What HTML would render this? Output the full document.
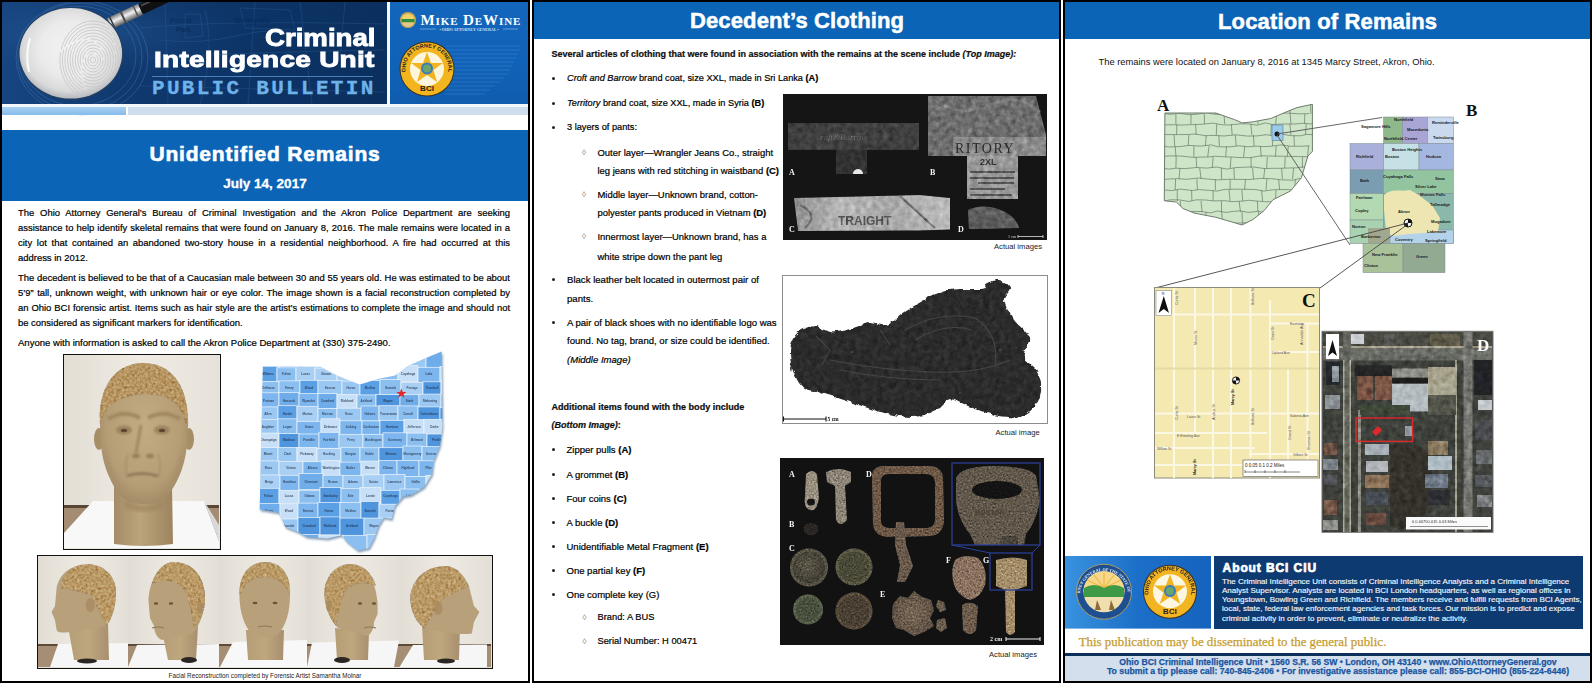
<!DOCTYPE html>
<html><head><meta charset="utf-8">
<style>
*{margin:0;padding:0;box-sizing:border-box}
html,body{width:1592px;height:683px;overflow:hidden;background:#fff;font-family:"Liberation Sans",sans-serif;color:#1e1e1e}
.a{position:absolute}
.frame{position:absolute;top:0;height:683px;border:2px solid #000;pointer-events:none;z-index:50}
.t{position:absolute;white-space:nowrap}
.t.b{-webkit-text-stroke:0.2px #000}
.hd{position:absolute;color:#fff;font-weight:bold;white-space:nowrap}
.para{position:absolute;font-size:9.5px;line-height:15px;text-align:justify;color:#000;-webkit-text-stroke:0.2px #000}
.para p{margin-bottom:5px}
.li{position:absolute;white-space:nowrap;font-size:9.2px;color:#000;-webkit-text-stroke:0.2px #000}
.dot{position:absolute;width:3px;height:3px;border-radius:50%;background:#222}
.dia{position:absolute;font-size:8px;color:#777}
svg{position:absolute;overflow:visible}
.b{font-weight:bold}
.i{font-style:italic}
</style></head><body>
<svg width="0" height="0" style="position:absolute;left:0;top:0">
<defs>
<filter id="txF" x="-5%" y="-5%" width="110%" height="110%" color-interpolation-filters="sRGB">
  <feTurbulence type="fractalNoise" baseFrequency="0.55" numOctaves="2" seed="4" result="noise"/>
  <feColorMatrix in="noise" type="matrix" values="0.33 0.33 0.33 0 0  0.33 0.33 0.33 0 0  0.33 0.33 0.33 0 0  0 0 0 0 1" result="gray"/>
  <feBlend in="gray" in2="SourceGraphic" mode="overlay" result="bl"/>
  <feComposite in="bl" in2="SourceAlpha" operator="in"/>
</filter>
<filter id="txC" x="-5%" y="-5%" width="110%" height="110%" color-interpolation-filters="sRGB">
  <feTurbulence type="fractalNoise" baseFrequency="0.22" numOctaves="3" seed="9" result="noise"/>
  <feColorMatrix in="noise" type="matrix" values="0.33 0.33 0.33 0 0  0.33 0.33 0.33 0 0  0.33 0.33 0.33 0 0  0 0 0 0 1" result="gray"/>
  <feComponentTransfer in="gray" result="g2"><feFuncR type="linear" slope="1.4" intercept="-0.2"/><feFuncG type="linear" slope="1.4" intercept="-0.2"/><feFuncB type="linear" slope="1.4" intercept="-0.2"/></feComponentTransfer>
  <feBlend in="g2" in2="SourceGraphic" mode="overlay" result="bl"/>
  <feComposite in="bl" in2="SourceAlpha" operator="in"/>
</filter>
<filter id="txM" x="-5%" y="-5%" width="110%" height="110%" color-interpolation-filters="sRGB">
  <feTurbulence type="fractalNoise" baseFrequency="0.25" numOctaves="3" seed="2" result="noise"/>
  <feColorMatrix in="noise" type="matrix" values="0.33 0.33 0.33 0 0  0.33 0.33 0.33 0 0  0.33 0.33 0.33 0 0  0 0 0 0 1" result="gray"/>
  <feComponentTransfer in="gray" result="g2"><feFuncR type="linear" slope="1.1" intercept="-0.05"/><feFuncG type="linear" slope="1.1" intercept="-0.05"/><feFuncB type="linear" slope="1.1" intercept="-0.05"/></feComponentTransfer>
  <feBlend in="g2" in2="SourceGraphic" mode="overlay" result="bl"/>
  <feComposite in="bl" in2="SourceAlpha" operator="in"/>
</filter>
<filter id="txS" x="-5%" y="-5%" width="110%" height="110%" color-interpolation-filters="sRGB">
  <feTurbulence type="fractalNoise" baseFrequency="0.18" numOctaves="3" seed="5" result="noise"/>
  <feColorMatrix in="noise" type="matrix" values="0.33 0.33 0.33 0 0  0.33 0.33 0.33 0 0  0.33 0.33 0.33 0 0  0 0 0 0 1" result="gray"/>
  <feComponentTransfer in="gray" result="g2"><feFuncR type="linear" slope="0.7" intercept="0.15"/><feFuncG type="linear" slope="0.7" intercept="0.15"/><feFuncB type="linear" slope="0.7" intercept="0.15"/></feComponentTransfer>
  <feBlend in="g2" in2="SourceGraphic" mode="overlay" result="bl"/>
  <feComposite in="bl" in2="SourceAlpha" operator="in"/>
</filter>
<filter id="txH" x="-5%" y="-5%" width="110%" height="110%" color-interpolation-filters="sRGB">
  <feTurbulence type="fractalNoise" baseFrequency="0.38" numOctaves="2" seed="8" result="noise"/>
  <feColorMatrix in="noise" type="matrix" values="0.33 0.33 0.33 0 0  0.33 0.33 0.33 0 0  0.33 0.33 0.33 0 0  0 0 0 0 1" result="gray"/>
  <feComponentTransfer in="gray" result="g2"><feFuncR type="linear" slope="1.6" intercept="-0.3"/><feFuncG type="linear" slope="1.6" intercept="-0.3"/><feFuncB type="linear" slope="1.6" intercept="-0.3"/></feComponentTransfer>
  <feBlend in="g2" in2="SourceGraphic" mode="soft-light" result="bl"/>
  <feComposite in="bl" in2="SourceAlpha" operator="in"/>
</filter>
<filter id="rough" x="-5%" y="-5%" width="110%" height="110%">
  <feTurbulence type="fractalNoise" baseFrequency="0.15" numOctaves="2" seed="3" result="n"/>
  <feDisplacementMap in="SourceGraphic" in2="n" scale="5" xChannelSelector="R" yChannelSelector="G"/>
</filter>
</defs></svg>
<div class="frame" style="left:0;width:530px"></div>
<div class="frame" style="left:532px;width:529px"></div>
<div class="frame" style="left:1063px;width:529px"></div>
<!-- ================= PANEL 1 ================= -->
<!-- header left navy -->
<div class="a" style="left:2px;top:2px;width:385px;height:102px;background:linear-gradient(90deg,#164580 0%,#10396f 30%,#0d3466 60%,#0b305f 100%)"></div>
<svg style="left:0;top:0" width="530" height="106" viewBox="0 0 530 106">
  <defs>
    <radialGradient id="lens" cx="0.5" cy="0.45" r="0.55">
      <stop offset="0" stop-color="#f2f2f2"/>
      <stop offset="0.55" stop-color="#ebebeb"/>
      <stop offset="0.85" stop-color="#dadada"/>
      <stop offset="1" stop-color="#b4b8be"/>
    </radialGradient>
    <linearGradient id="chrome" x1="0" y1="0" x2="0" y2="1">
      <stop offset="0" stop-color="#7a7a7a"/><stop offset="0.45" stop-color="#f2f2f2"/><stop offset="1" stop-color="#5a5a5a"/>
    </linearGradient>
    <clipPath id="lensclip"><ellipse cx="70.8" cy="53.3" rx="50" ry="44"/></clipPath>
    <radialGradient id="hdrglow" cx="0.2" cy="0.3" r="0.5"><stop offset="0" stop-color="#2a5f9e" stop-opacity="0.6"/><stop offset="1" stop-color="#0f3a6f" stop-opacity="0"/></radialGradient>
  </defs>
  <rect x="2" y="2" width="385" height="102" fill="url(#hdrglow)"/>
  <g stroke="#3366a3" stroke-width="0.9" fill="none" opacity="0.35">
    <path d="M165 2 L168 104 M205 10 Q215 50 200 104 M255 2 L248 104 M300 2 L312 104 M345 2 L340 60"/>
    <path d="M140 28 Q220 20 385 24 M150 58 Q250 52 385 50 M140 86 L385 92 M160 40 Q200 45 240 35 T320 40"/>
    <path d="M185 14 L200 14 L203 36 L185 38 Z M240 8 L290 10 L295 30 L245 28 Z"/>
  </g>
  <text x="170" y="23" font-size="7" fill="#0a2c58" font-family="Liberation Sans" font-weight="bold" opacity="0.8">Forest</text>
  <text x="176" y="32" font-size="7" fill="#0a2c58" font-family="Liberation Sans" font-weight="bold" opacity="0.8">Park</text>
  <text x="234" y="23" font-size="7" fill="#0a2c58" font-family="Liberation Sans" font-weight="bold" opacity="0.8">Springdale</text>
  <g stroke="#5a8fcc" stroke-width="0.7" fill="none" opacity="0.45">
    <ellipse cx="78" cy="56" rx="58" ry="50"/><ellipse cx="80" cy="57" rx="62" ry="54"/><ellipse cx="82" cy="58" rx="66" ry="57"/>
  </g>
  <!-- handle -->
  <g transform="rotate(-25 126 16)">
    <rect x="108" y="10" width="34" height="12" fill="url(#chrome)"/>
    <rect x="110" y="10" width="1.5" height="12" fill="#3a3a3a"/><rect x="122" y="10" width="2" height="12" fill="#4a4a4a"/><rect x="136" y="10" width="1.5" height="12" fill="#555"/>
    <rect x="142" y="10.5" width="60" height="11" rx="2" fill="#111"/>
    <rect x="144" y="12" width="56" height="2" fill="#4a4a4a"/>
  </g>
  <ellipse cx="70.8" cy="53.5" rx="52.5" ry="46.5" fill="#243f60"/>
  <ellipse cx="70.8" cy="53.3" rx="51.3" ry="45.3" fill="url(#lens)"/>
  <g stroke="#c8c8c8" stroke-width="1" fill="none" opacity="0.9" clip-path="url(#lensclip)">
    <ellipse cx="93" cy="60" rx="2.5" ry="3.0" stroke-dasharray="23 3"/><ellipse cx="93" cy="60" rx="5.1" ry="6.0" stroke-dasharray="26 3"/><ellipse cx="93" cy="60" rx="7.6" ry="9.0" stroke-dasharray="29 3"/><ellipse cx="93" cy="60" rx="10.2" ry="12.0" stroke-dasharray="32 3"/><ellipse cx="93" cy="60" rx="12.8" ry="15.0" stroke-dasharray="35 3"/><ellipse cx="93" cy="60" rx="15.3" ry="18.0" stroke-dasharray="38 3"/><ellipse cx="93" cy="60" rx="17.8" ry="21.0" stroke-dasharray="41 3"/><ellipse cx="93" cy="60" rx="20.4" ry="24.0" stroke-dasharray="44 3"/><ellipse cx="93" cy="60" rx="22.9" ry="27.0" stroke-dasharray="47 3"/><ellipse cx="93" cy="60" rx="25.5" ry="30.0" stroke-dasharray="50 3"/><ellipse cx="93" cy="60" rx="28.1" ry="33.0" stroke-dasharray="53 3"/><ellipse cx="93" cy="60" rx="30.6" ry="36.0" stroke-dasharray="56 3"/><ellipse cx="93" cy="60" rx="33.1" ry="39.0" stroke-dasharray="59 3"/>
  </g>
  <path d="M30 38 Q25 55 29 72" stroke="#ffffff" stroke-width="2.2" fill="none" opacity="0.85"/>
</svg>
<div class="hd" style="left:264.5px;top:26px;font-size:24px;line-height:24px;transform:scaleX(1.15);transform-origin:0 0;-webkit-text-stroke:0.9px #fff">Criminal</div>
<div class="hd" style="left:153.5px;top:48.5px;font-size:22.5px;line-height:22.5px;transform:scaleX(1.245);transform-origin:0 0;letter-spacing:0.2px;-webkit-text-stroke:0.9px #fff">Intelligence Unit</div>
<div class="a" style="left:152px;top:76px;width:221px;height:1px;background:#4c7fba"></div>
<div class="t" style="left:152px;top:78px;font-family:'Liberation Mono',monospace;font-weight:bold;font-size:21px;line-height:21px;letter-spacing:2.3px;color:#6db3ea;-webkit-text-stroke:0.3px #6db3ea">PUBLIC BULLETIN</div>
<!-- divider + right header -->
<div class="a" style="left:387px;top:2px;width:3px;height:102px;background:#f4f8fc"></div>
<div class="a" style="left:390px;top:2px;width:138px;height:102px;background:linear-gradient(180deg,#1466bd 0%,#1062b8 60%,#0f5cae 100%)"></div>
<svg style="left:390px;top:2px" width="138" height="102" viewBox="390 2 138 102">
  <g stroke="#5d9be0" stroke-width="1">
    <path d="M446 46 H520 M444 50 H520 M444 54 H518 M444 58 H516 M444 62 H514 M444 66 H512 M444 70 H510 M444 74 H508 M444 78 H504 M444 82 H500 M444 86 H495 M444 90 H490 M444 94 H485" opacity="0.3"/>
  </g>
  <circle cx="408" cy="20" r="8" fill="#c9a850"/>
  <circle cx="408" cy="20" r="6.3" fill="#f0d26a"/>
  <rect x="401.5" y="19" width="13" height="3.5" fill="#2f8f3e"/>
  <path d="M402 22.5 H414 A6.3 6.3 0 0 1 402 22.5 Z" fill="#e6c58a"/>
  <path d="M420 29 H436 M503 29 H518" stroke="#9cc4ee" stroke-width="0.6"/>
  <text x="469" y="30.5" font-size="4" fill="#cfe2f6" text-anchor="middle" font-family="Liberation Serif" font-weight="bold">• OHIO ATTORNEY GENERAL •</text>
  <!-- BCI badge -->
  <circle cx="427" cy="69" r="27.5" fill="#3a3020"/>
  <circle cx="427" cy="69" r="26.5" fill="#f2b51e"/>
  <circle cx="427" cy="69" r="17" fill="#fdf5dc"/>
  <path d="M427 52 L431 63 L443 63 L433.5 70 L437 82 L427 75 L417 82 L420.5 70 L411 63 L423 63 Z" fill="#f2b51e"/>
  <circle cx="427" cy="68.5" r="6" fill="#3b7bc0"/>
  <circle cx="427" cy="68.5" r="4" fill="#6aa56a"/>
  <text x="427" y="91" font-size="8" fill="#222" text-anchor="middle" font-family="Liberation Sans" font-weight="bold">BCI</text>
  <path id="arcA" d="M406.8 76.35 A21.5 21.5 0 1 1 447.2 76.35" fill="none"/>
  <text font-size="5.5" fill="#222" font-family="Liberation Sans" font-weight="bold"><textPath href="#arcA" startOffset="50%" text-anchor="middle">OHIO ATTORNEY GENERAL</textPath></text>
</svg>
<div class="t" style="left:420.5px;top:12.5px;font-family:'Liberation Serif',serif;font-weight:bold;font-size:15px;line-height:15px;font-variant:small-caps;letter-spacing:0.9px;color:#fff">Mike DeWine</div>
<!-- light bars -->
<div class="a" style="left:2px;top:104px;width:526px;height:3px;background:#f2f7fc"></div>
<div class="a" style="left:2px;top:107px;width:124px;height:8px;background:linear-gradient(180deg,#a9d0f2,#86bbea)"></div>
<div class="a" style="left:128px;top:107px;width:400px;height:8px;background:#cfdeec"></div>
<!-- blue title band -->
<div class="a" style="left:2px;top:130px;width:526px;height:71px;background:#0b64b6"></div>
<div class="hd" style="left:2px;width:526px;text-align:center;top:143px;font-size:21px;line-height:21px;letter-spacing:0.82px;padding-left:0px;-webkit-text-stroke:0.6px #fff">Unidentified Remains</div>
<div class="hd" style="left:2px;width:526px;text-align:center;top:176.5px;font-size:13.5px;line-height:13.5px;-webkit-text-stroke:0.3px #fff">July 14, 2017</div>
<!-- body text -->
<div class="para" style="left:18px;top:204.6px;width:492px;font-size:9.45px">
<div style="text-align-last:justify">The Ohio Attorney General’s Bureau of Criminal Investigation and the Akron Police Department are seeking</div>
<div style="text-align-last:justify">assistance to help identify skeletal remains that were found on January 8, 2016. The male remains were located in a</div>
<div style="text-align-last:justify">city lot that contained an abandoned two-story house in a residential neighborhood. A fire had occurred at this</div>
<div style="margin-bottom:5px">address in 2012.</div>
<div style="text-align-last:justify">The decedent is believed to be that of a Caucasian male between 30 and 55 years old. He was estimated to be about</div>
<div style="text-align-last:justify">5’9” tall, unknown weight, with unknown hair or eye color. The image shown is a facial reconstruction completed by</div>
<div style="text-align-last:justify">an Ohio BCI forensic artist. Items such as hair style are the artist’s estimations to complete the image and should not</div>
<div style="margin-bottom:5px">be considered as significant markers for identification.</div>
<div style="font-size:9.55px">Anyone with information is asked to call the Akron Police Department at (330) 375-2490.</div>
</div>
<!-- face photo -->
<div class="a" style="left:63px;top:354px;width:158px;height:196px;border:1.6px solid #111;background:#ebe7df;overflow:hidden">
<svg style="left:0;top:0;filter:blur(0.4px)" width="155" height="193" viewBox="0 0 155 193">
  <defs>
    <linearGradient id="wall" x1="0" y1="0" x2="1" y2="0"><stop offset="0" stop-color="#e3ded4"/><stop offset="0.5" stop-color="#efebe4"/><stop offset="1" stop-color="#e7e2d9"/></linearGradient>
    <radialGradient id="skin" cx="0.5" cy="0.45" r="0.6"><stop offset="0" stop-color="#c3ac84"/><stop offset="0.7" stop-color="#b59d76"/><stop offset="1" stop-color="#9e8662"/></radialGradient>
    <linearGradient id="neck" x1="0" y1="0" x2="1" y2="0"><stop offset="0" stop-color="#a48c68"/><stop offset="0.45" stop-color="#bba37c"/><stop offset="1" stop-color="#9c845f"/></linearGradient>
    <filter id="fb" x="-20%" y="-20%" width="140%" height="140%"><feGaussianBlur stdDeviation="1.2"/></filter>
    <filter id="fb2" x="-20%" y="-20%" width="140%" height="140%"><feGaussianBlur stdDeviation="2.2"/></filter>
  </defs>
  <rect width="155" height="193" fill="url(#wall)"/>
  <rect x="0" y="150" width="155" height="43" fill="#a48c72"/>
  <rect x="0" y="150" width="155" height="3" fill="#5a4634"/>
  <path d="M29 146 L140 146 L155 186 L155 193 L0 193 L0 178 Z" fill="#f8f8f8"/>
  <path d="M140 146 L155 186 L155 170 Z" fill="#d8d8d8"/>
  <path d="M50 132 L108 132 L109 189 Q80 193 50 189 Z" fill="url(#neck)"/>
  <path d="M62 146 Q80 156 98 146 L100 152 Q80 160 60 152 Z" fill="#a08862" filter="url(#fb2)"/>
  <ellipse cx="35" cy="84" rx="5" ry="11" fill="#a68e69"/>
  <ellipse cx="125" cy="84" rx="5" ry="11" fill="#a68e69"/>
  <path d="M79 10 C103 10 121 27 123 58 C125 76 124 96 118 114 C113 128 106 140 97 146 C90 150 70 150 63 146 C54 140 47 128 42 114 C36 96 35 76 37 58 C39 27 55 10 79 10 Z" fill="url(#skin)"/>
  <g filter="url(#fb)">
    <path d="M44 64 Q60 54 76 63 M84 63 Q100 54 116 64" stroke="#a0885f" stroke-width="4" fill="none"/>
    <ellipse cx="60" cy="75" rx="8" ry="4.5" fill="#9c845e"/>
    <ellipse cx="98" cy="75" rx="8" ry="4.5" fill="#9c845e"/>
    <path d="M77 70 L72 98" stroke="#a08860" stroke-width="3" fill="none"/>
    <ellipse cx="72" cy="101" rx="4" ry="2.2" fill="#94805a"/><ellipse cx="86" cy="101" rx="4" ry="2.2" fill="#94805a"/>
    <path d="M62 121 Q78 116 94 121" stroke="#8a7252" stroke-width="2.4" fill="none"/>
    <path d="M64 99 Q60 110 63 122 M94 99 Q98 110 95 122" stroke="#a89070" stroke-width="1.8" fill="none"/>
    <path d="M42 100 Q46 120 58 136 M118 100 Q114 120 102 136" stroke="#a89070" stroke-width="2" fill="none"/>
  </g>
  <ellipse cx="60" cy="75.5" rx="3.2" ry="1.7" fill="#5a4632"/>
  <ellipse cx="98" cy="75.5" rx="3.2" ry="1.7" fill="#5a4632"/>
  <path d="M36 70 C33 32 52 8 79 8 C107 8 126 30 124 74 C121 66 118 56 113 50 C105 42 94 39 82 39 C68 39 55 43 47 50 C41 56 38 62 36 70 Z" fill="#b99762" filter="url(#txH)"/>
</svg>
</div>
<!-- Ohio county map -->
<svg style="left:0;top:0" width="530" height="683" viewBox="0 0 530 683">
  <defs>
    <clipPath id="ohio1"><path d="M262.9 366.7 L320.9 366.7 L322.5 368 L337 375.6 L346.6 379.6 L359.5 384.5 L366 382.8 L378.8 378.8 L395 375.6 L407.8 366 L422.3 359.5 L441.6 351.4 L442.4 427 L440 445 L433.6 461 L432 474 L424 486.9 L411 495 L403 496.5 L395 506 L391.7 519 L383.7 517.5 L378.8 525.5 L374 538.4 L369 548 L357.9 550.5 L346.6 541.6 L341.8 535 L327.3 538.4 L306.4 536.8 L298.3 532 L285.4 527 L279 512.6 L266 510.2 L259.7 509.4 Z"/></clipPath>
    <filter id="sh" x="-10%" y="-10%" width="120%" height="120%"><feGaussianBlur stdDeviation="1"/></filter>
  </defs>
  <path d="M263.9 368.7 L321.9 368.7 L323.5 370 L338 377.6 L347.6 381.6 L360.5 386.5 L367 384.8 L379.8 380.8 L396 377.6 L408.8 368 L423.3 361.5 L442.6 353.4 L443.4 429 L441 447 L434.6 463 L433 476 L425 488.9 L412 497 L404 498.5 L396 508 L392.7 521 L384.7 519.5 L379.8 527.5 L375 540.4 L370 550 L358.9 552.5 L347.6 543.6 L342.8 537 L328.3 540.4 L307.4 538.8 L299.3 534 L286.4 529 L280 514.6 L267 512.2 L260.7 511.4 Z" fill="#8aa0b8" filter="url(#sh)"/>
  <g clip-path="url(#ohio1)" stroke="#eef5fc" stroke-width="0.7">
<rect x="258" y="347.3" width="22" height="21" fill="#7db6ee"/>
<rect x="280" y="349.3" width="24" height="21" fill="#5b9fe4"/>
<rect x="304" y="348.8" width="21" height="21" fill="#a9d0f4"/>
<rect x="325" y="346.7" width="24" height="21" fill="#8bbff0"/>
<rect x="349" y="347.6" width="18" height="21" fill="#a9d0f4"/>
<rect x="367" y="348.1" width="21" height="21" fill="#a9d0f4"/>
<rect x="388" y="348.7" width="18" height="21" fill="#9ac8f2"/>
<rect x="406" y="347.0" width="20" height="21" fill="#9ac8f2"/>
<rect x="426" y="348.8" width="19" height="21" fill="#6fadea"/>
<rect x="445" y="348.4" width="19" height="21" fill="#4f95de"/>
<rect x="258" y="365.9" width="19" height="16" fill="#5b9fe4"/>
<rect x="277" y="367.8" width="19" height="16" fill="#8bbff0"/>
<rect x="296" y="366.4" width="19" height="16" fill="#a9d0f4"/>
<rect x="315" y="368.1" width="22" height="16" fill="#a9d0f4"/>
<rect x="337" y="368.3" width="19" height="16" fill="#a9d0f4"/>
<rect x="356" y="366.4" width="21" height="16" fill="#7db6ee"/>
<rect x="377" y="366.0" width="21" height="16" fill="#8bbff0"/>
<rect x="398" y="365.7" width="20" height="16" fill="#c8e0f7"/>
<rect x="418" y="367.3" width="22" height="16" fill="#7db6ee"/>
<rect x="440" y="366.4" width="18" height="16" fill="#c8e0f7"/>
<rect x="258" y="381.6" width="21" height="15" fill="#8bbff0"/>
<rect x="279" y="380.9" width="21" height="15" fill="#8bbff0"/>
<rect x="300" y="380.3" width="18" height="15" fill="#5b9fe4"/>
<rect x="318" y="380.6" width="24" height="15" fill="#9ac8f2"/>
<rect x="342" y="381.1" width="18" height="15" fill="#9ac8f2"/>
<rect x="360" y="380.6" width="20" height="15" fill="#5b9fe4"/>
<rect x="380" y="379.6" width="21" height="15" fill="#8bbff0"/>
<rect x="401" y="382.4" width="22" height="15" fill="#a9d0f4"/>
<rect x="423" y="381.8" width="18" height="15" fill="#4f95de"/>
<rect x="441" y="381.0" width="20" height="15" fill="#c8e0f7"/>
<rect x="258" y="392.8" width="21" height="15" fill="#7db6ee"/>
<rect x="279" y="392.6" width="20" height="15" fill="#6fadea"/>
<rect x="299" y="393.5" width="19" height="15" fill="#7db6ee"/>
<rect x="318" y="393.5" width="19" height="15" fill="#6fadea"/>
<rect x="337" y="394.6" width="20" height="15" fill="#c8e0f7"/>
<rect x="357" y="394.9" width="19" height="15" fill="#8bbff0"/>
<rect x="376" y="394.6" width="24" height="15" fill="#4f95de"/>
<rect x="400" y="394.7" width="19" height="15" fill="#6fadea"/>
<rect x="419" y="394.1" width="22" height="15" fill="#9ac8f2"/>
<rect x="441" y="393.2" width="18" height="15" fill="#7db6ee"/>
<rect x="258" y="406.9" width="20" height="15" fill="#9ac8f2"/>
<rect x="278" y="405.7" width="19" height="15" fill="#5b9fe4"/>
<rect x="297" y="406.5" width="21" height="15" fill="#a9d0f4"/>
<rect x="318" y="408.4" width="19" height="15" fill="#8bbff0"/>
<rect x="337" y="408.2" width="24" height="15" fill="#9ac8f2"/>
<rect x="361" y="406.0" width="18" height="15" fill="#7db6ee"/>
<rect x="379" y="405.7" width="19" height="15" fill="#9ac8f2"/>
<rect x="398" y="405.9" width="20" height="15" fill="#8bbff0"/>
<rect x="418" y="406.9" width="22" height="15" fill="#4f95de"/>
<rect x="440" y="407.7" width="24" height="15" fill="#4f95de"/>
<rect x="258" y="419.4" width="20" height="15" fill="#9ac8f2"/>
<rect x="278" y="418.8" width="19" height="15" fill="#8bbff0"/>
<rect x="297" y="421.3" width="24" height="15" fill="#7db6ee"/>
<rect x="321" y="418.8" width="19" height="15" fill="#c8e0f7"/>
<rect x="340" y="420.8" width="22" height="15" fill="#7db6ee"/>
<rect x="362" y="420.9" width="18" height="15" fill="#7db6ee"/>
<rect x="380" y="420.3" width="24" height="15" fill="#5b9fe4"/>
<rect x="404" y="419.6" width="20" height="15" fill="#c8e0f7"/>
<rect x="424" y="419.3" width="21" height="15" fill="#c8e0f7"/>
<rect x="445" y="420.4" width="20" height="15" fill="#5b9fe4"/>
<rect x="258" y="433.1" width="21" height="16" fill="#c8e0f7"/>
<rect x="279" y="433.5" width="20" height="16" fill="#4f95de"/>
<rect x="299" y="434.0" width="20" height="16" fill="#7db6ee"/>
<rect x="319" y="432.3" width="20" height="16" fill="#7db6ee"/>
<rect x="339" y="434.3" width="24" height="16" fill="#9ac8f2"/>
<rect x="363" y="434.3" width="20" height="16" fill="#8bbff0"/>
<rect x="383" y="432.8" width="24" height="16" fill="#7db6ee"/>
<rect x="407" y="433.1" width="20" height="16" fill="#8bbff0"/>
<rect x="427" y="434.0" width="19" height="16" fill="#4f95de"/>
<rect x="258" y="447.6" width="20" height="16" fill="#9ac8f2"/>
<rect x="278" y="447.4" width="19" height="16" fill="#9ac8f2"/>
<rect x="297" y="447.4" width="20" height="16" fill="#c8e0f7"/>
<rect x="317" y="448.5" width="24" height="16" fill="#a9d0f4"/>
<rect x="341" y="447.3" width="19" height="16" fill="#8bbff0"/>
<rect x="360" y="447.8" width="19" height="16" fill="#8bbff0"/>
<rect x="379" y="447.7" width="24" height="16" fill="#4f95de"/>
<rect x="403" y="446.0" width="19" height="16" fill="#8bbff0"/>
<rect x="422" y="446.5" width="18" height="16" fill="#8bbff0"/>
<rect x="440" y="446.1" width="21" height="16" fill="#5b9fe4"/>
<rect x="258" y="460.9" width="21" height="16" fill="#9ac8f2"/>
<rect x="279" y="461.3" width="24" height="16" fill="#a9d0f4"/>
<rect x="303" y="461.7" width="19" height="16" fill="#7db6ee"/>
<rect x="322" y="460.6" width="18" height="16" fill="#c8e0f7"/>
<rect x="340" y="462.1" width="21" height="16" fill="#7db6ee"/>
<rect x="361" y="461.1" width="18" height="16" fill="#c8e0f7"/>
<rect x="379" y="460.4" width="18" height="16" fill="#7db6ee"/>
<rect x="397" y="460.4" width="22" height="16" fill="#7db6ee"/>
<rect x="419" y="460.8" width="19" height="16" fill="#7db6ee"/>
<rect x="438" y="459.9" width="21" height="16" fill="#9ac8f2"/>
<rect x="258" y="474.9" width="22" height="16" fill="#a9d0f4"/>
<rect x="280" y="475.3" width="19" height="16" fill="#7db6ee"/>
<rect x="299" y="473.5" width="24" height="16" fill="#6fadea"/>
<rect x="323" y="475.2" width="20" height="16" fill="#8bbff0"/>
<rect x="343" y="475.4" width="20" height="16" fill="#9ac8f2"/>
<rect x="363" y="474.8" width="21" height="16" fill="#a9d0f4"/>
<rect x="384" y="474.4" width="21" height="16" fill="#9ac8f2"/>
<rect x="405" y="476.4" width="21" height="16" fill="#8bbff0"/>
<rect x="426" y="475.3" width="22" height="16" fill="#c8e0f7"/>
<rect x="258" y="488.3" width="21" height="16" fill="#5b9fe4"/>
<rect x="279" y="490.3" width="20" height="16" fill="#c8e0f7"/>
<rect x="299" y="490.3" width="21" height="16" fill="#8bbff0"/>
<rect x="320" y="487.6" width="21" height="16" fill="#4f95de"/>
<rect x="341" y="488.4" width="19" height="16" fill="#8bbff0"/>
<rect x="360" y="487.5" width="21" height="16" fill="#c8e0f7"/>
<rect x="381" y="490.3" width="19" height="16" fill="#5b9fe4"/>
<rect x="400" y="489.0" width="19" height="16" fill="#8bbff0"/>
<rect x="419" y="490.5" width="24" height="16" fill="#c8e0f7"/>
<rect x="443" y="489.3" width="21" height="16" fill="#4f95de"/>
<rect x="258" y="503.4" width="22" height="17" fill="#6fadea"/>
<rect x="280" y="503.8" width="18" height="17" fill="#c8e0f7"/>
<rect x="298" y="503.1" width="20" height="17" fill="#7db6ee"/>
<rect x="318" y="502.4" width="22" height="17" fill="#5b9fe4"/>
<rect x="340" y="502.5" width="21" height="17" fill="#8bbff0"/>
<rect x="361" y="501.5" width="18" height="17" fill="#4f95de"/>
<rect x="379" y="504.2" width="24" height="17" fill="#a9d0f4"/>
<rect x="403" y="502.8" width="18" height="17" fill="#9ac8f2"/>
<rect x="421" y="503.2" width="22" height="17" fill="#4f95de"/>
<rect x="443" y="502.9" width="21" height="17" fill="#a9d0f4"/>
<rect x="258" y="517.9" width="20" height="18" fill="#6fadea"/>
<rect x="278" y="519.0" width="20" height="18" fill="#9ac8f2"/>
<rect x="298" y="517.4" width="22" height="18" fill="#4f95de"/>
<rect x="320" y="516.9" width="20" height="18" fill="#4f95de"/>
<rect x="340" y="518.1" width="24" height="18" fill="#4f95de"/>
<rect x="364" y="518.1" width="20" height="18" fill="#9ac8f2"/>
<rect x="384" y="518.1" width="22" height="18" fill="#5b9fe4"/>
<rect x="406" y="518.7" width="18" height="18" fill="#c8e0f7"/>
<rect x="424" y="518.9" width="18" height="18" fill="#5b9fe4"/>
<rect x="442" y="518.7" width="20" height="18" fill="#6fadea"/>
<rect x="258" y="534.6" width="21" height="20" fill="#5b9fe4"/>
<rect x="279" y="535.0" width="18" height="20" fill="#a9d0f4"/>
<rect x="297" y="534.4" width="22" height="20" fill="#6fadea"/>
<rect x="319" y="535.2" width="24" height="20" fill="#c8e0f7"/>
<rect x="343" y="535.3" width="24" height="20" fill="#8bbff0"/>
<rect x="367" y="534.3" width="19" height="20" fill="#9ac8f2"/>
<rect x="386" y="532.7" width="19" height="20" fill="#a9d0f4"/>
<rect x="405" y="534.2" width="18" height="20" fill="#9ac8f2"/>
<rect x="423" y="532.7" width="24" height="20" fill="#5b9fe4"/>
  </g>
  <g font-family="Liberation Sans" font-size="3" fill="#1e2a40" font-weight="bold" text-anchor="middle" opacity="0.8" clip-path="url(#ohio1)">
<text x="267.5" y="375.2">Williams</text>
<text x="286.5" y="375.2">Fulton</text>
<text x="305.5" y="375.2">Lucas</text>
<text x="326.0" y="375.2">Ottawa</text>
<text x="346.5" y="375.2">Sandusky</text>
<text x="366.5" y="375.2">Erie</text>
<text x="387.5" y="375.2">Lorain</text>
<text x="408.0" y="375.2">Cuyahoga</text>
<text x="429.0" y="375.2">Lake</text>
<text x="449.0" y="375.2">Ashtabula</text>
<text x="268.5" y="388.7">Defiance</text>
<text x="289.5" y="388.7">Henry</text>
<text x="309.0" y="388.7">Wood</text>
<text x="330.0" y="388.7">Seneca</text>
<text x="351.0" y="388.7">Huron</text>
<text x="370.0" y="388.7">Medina</text>
<text x="390.5" y="388.7">Summit</text>
<text x="412.0" y="388.7">Portage</text>
<text x="432.0" y="388.7">Trumbull</text>
<text x="451.0" y="388.7">Paulding</text>
<text x="268.5" y="401.7">Putnam</text>
<text x="289.0" y="401.7">Hancock</text>
<text x="308.5" y="401.7">Wyandot</text>
<text x="327.5" y="401.7">Crawford</text>
<text x="347.0" y="401.7">Richland</text>
<text x="366.5" y="401.7">Ashland</text>
<text x="388.0" y="401.7">Wayne</text>
<text x="409.5" y="401.7">Stark</text>
<text x="430.0" y="401.7">Mahoning</text>
<text x="450.0" y="401.7">VanWert</text>
<text x="268.0" y="414.7">Allen</text>
<text x="287.5" y="414.7">Hardin</text>
<text x="307.5" y="414.7">Marion</text>
<text x="327.5" y="414.7">Morrow</text>
<text x="349.0" y="414.7">Knox</text>
<text x="370.0" y="414.7">Holmes</text>
<text x="388.5" y="414.7">Tuscarawas</text>
<text x="408.0" y="414.7">Carroll</text>
<text x="429.0" y="414.7">Columbiana</text>
<text x="452.0" y="414.7">Mercer</text>
<text x="268.0" y="427.7">Auglaize</text>
<text x="287.5" y="427.7">Logan</text>
<text x="309.0" y="427.7">Union</text>
<text x="330.5" y="427.7">Delaware</text>
<text x="351.0" y="427.7">Licking</text>
<text x="371.0" y="427.7">Coshocton</text>
<text x="392.0" y="427.7">Harrison</text>
<text x="414.0" y="427.7">Jefferson</text>
<text x="434.5" y="427.7">Darke</text>
<text x="455.0" y="427.7">Shelby</text>
<text x="268.5" y="441.2">Champaign</text>
<text x="289.0" y="441.2">Madison</text>
<text x="309.0" y="441.2">Franklin</text>
<text x="329.0" y="441.2">Fairfield</text>
<text x="351.0" y="441.2">Perry</text>
<text x="373.0" y="441.2">Muskingum</text>
<text x="395.0" y="441.2">Guernsey</text>
<text x="417.0" y="441.2">Belmont</text>
<text x="436.5" y="441.2">Preble</text>
<text x="268.0" y="455.2">Miami</text>
<text x="287.5" y="455.2">Clark</text>
<text x="307.0" y="455.2">Pickaway</text>
<text x="329.0" y="455.2">Hocking</text>
<text x="350.5" y="455.2">Morgan</text>
<text x="369.5" y="455.2">Noble</text>
<text x="391.0" y="455.2">Monroe</text>
<text x="412.5" y="455.2">Montgomery</text>
<text x="431.0" y="455.2">Greene</text>
<text x="450.5" y="455.2">Fayette</text>
<text x="268.5" y="469.2">Ross</text>
<text x="291.0" y="469.2">Vinton</text>
<text x="312.5" y="469.2">Athens</text>
<text x="331.0" y="469.2">Washington</text>
<text x="350.5" y="469.2">Butler</text>
<text x="370.0" y="469.2">Warren</text>
<text x="388.0" y="469.2">Clinton</text>
<text x="408.0" y="469.2">Highland</text>
<text x="428.5" y="469.2">Pike</text>
<text x="448.5" y="469.2">Jackson</text>
<text x="269.0" y="483.2">Meigs</text>
<text x="289.5" y="483.2">Hamilton</text>
<text x="311.0" y="483.2">Clermont</text>
<text x="333.0" y="483.2">Brown</text>
<text x="353.0" y="483.2">Adams</text>
<text x="373.5" y="483.2">Scioto</text>
<text x="394.5" y="483.2">Lawrence</text>
<text x="415.5" y="483.2">Gallia</text>
<text x="437.0" y="483.2">Williams</text>
<text x="268.5" y="497.2">Fulton</text>
<text x="289.0" y="497.2">Lucas</text>
<text x="309.5" y="497.2">Ottawa</text>
<text x="330.5" y="497.2">Sandusky</text>
<text x="350.5" y="497.2">Erie</text>
<text x="370.5" y="497.2">Lorain</text>
<text x="390.5" y="497.2">Cuyahoga</text>
<text x="409.5" y="497.2">Lake</text>
<text x="431.0" y="497.2">Ashtabula</text>
<text x="453.5" y="497.2">Defiance</text>
<text x="269.0" y="511.7">Henry</text>
<text x="289.0" y="511.7">Wood</text>
<text x="308.0" y="511.7">Seneca</text>
<text x="329.0" y="511.7">Huron</text>
<text x="350.5" y="511.7">Medina</text>
<text x="370.0" y="511.7">Summit</text>
<text x="391.0" y="511.7">Portage</text>
<text x="412.0" y="511.7">Trumbull</text>
<text x="432.0" y="511.7">Paulding</text>
<text x="453.5" y="511.7">Putnam</text>
<text x="268.0" y="527.2">Hancock</text>
<text x="288.0" y="527.2">Wyandot</text>
<text x="309.0" y="527.2">Crawford</text>
<text x="330.0" y="527.2">Richland</text>
<text x="352.0" y="527.2">Ashland</text>
<text x="374.0" y="527.2">Wayne</text>
<text x="395.0" y="527.2">Stark</text>
<text x="415.0" y="527.2">Mahoning</text>
<text x="433.0" y="527.2">VanWert</text>
<text x="452.0" y="527.2">Allen</text>
  </g>
  <path d="M401.4 388.5 L402.8 392 L406.5 392 L403.5 394.3 L404.6 397.8 L401.4 395.6 L398.2 397.8 L399.3 394.3 L396.3 392 L400 392 Z" fill="#e0282a"/>
</svg>
<!-- 5-face strip -->
<div class="a" style="left:37px;top:555px;width:456px;height:114px;border:1.6px solid #111;background:#e7e2d8;overflow:hidden">
<svg style="left:0;top:0;filter:blur(0.4px)" width="453" height="111" viewBox="0 0 453 111">
  <defs>
    <linearGradient id="w2" x1="0" y1="0" x2="1" y2="0"><stop offset="0" stop-color="#e2ddd4"/><stop offset="0.5" stop-color="#eeeae3"/><stop offset="1" stop-color="#e4dfd6"/></linearGradient>
    <linearGradient id="sk2" x1="0" y1="0" x2="1" y2="0"><stop offset="0" stop-color="#b59d76"/><stop offset="0.5" stop-color="#bea67e"/><stop offset="1" stop-color="#a89070"/></linearGradient>
  </defs>
  <g>
    <rect x="0" y="0" width="90" height="111" fill="url(#w2)"/><rect x="90" y="0" width="91" height="111" fill="url(#w2)"/><rect x="181" y="0" width="88" height="111" fill="url(#w2)"/><rect x="269" y="0" width="92" height="111" fill="url(#w2)"/><rect x="361" y="0" width="92" height="111" fill="url(#w2)"/>
  </g>
  <rect x="0" y="88" width="453" height="23" fill="#a68e74"/>
  <rect x="0" y="88" width="453" height="2" fill="#5e4a38"/>
  <!-- pedestals -->
  <path d="M20 88 L90 87 L90 111 L12 111 Z" fill="#f6f6f6"/>
  <path d="M99 89 L181 88 L181 111 L90 111 Z" fill="#f6f6f6"/>
  <path d="M195 86 L269 84 L269 111 L182 111 Z" fill="#f8f8f8"/>
  <path d="M274 86.6 L361 84.5 L356 111 L269 111 Z" fill="#f6f6f6"/>
  <path d="M375 89 L449 88.5 L449 111 L361.5 111 Z" fill="#f6f6f6"/>
  <!-- necks -->
  <g fill="url(#sk2)">
    <path d="M30 70 L70 66 L71 104 L36 104 Z"/>
    <path d="M124 75 L160 70 L158 104 L130 104 Z"/>
    <path d="M208 74 L246 74 L245 104 L210 104 Z"/>
    <path d="M297 72 L331 76 L330 104 L299 104 Z"/>
    <path d="M384 70 L422 70 L421 104 L386 104 Z"/>
  </g>
  <!-- heads -->
  <g fill="#b8a07a">
    <path d="M49 9 C66 9 78 20 78 36 C78 52 72 64 68 70 L36 76 C28 76 20 78 18.6 74 L17 64 L13.5 56 L17 50 L18.6 32 C22 16 34 9 49 9 Z"/>
    <path d="M136 7.7 C154 7.7 167 20 167 42 C167 58 160 72 154 78 L124 84 C118 82 116 74 116 70 L112 62 L110.4 44 C112 22 122 7.7 136 7.7 Z"/>
    <path d="M227 8 C242 8 252 18 252 38 C252 56 248 70 240 78 C234 82 220 82 214 78 C206 70 201.4 56 201.4 38 C201.4 18 212 8 227 8 Z"/>
    <path d="M312.6 9.4 C300 9.4 286.5 20 286.5 36 C286.5 50 292 64 300 72 L330 80 C334 76 336 72 336 66 L339.6 58 L339.6 47 C338 24 328 9.4 312.6 9.4 Z"/>
    <path d="M407 11 C390 11 372.4 24 372.4 42 C372.4 54 378 66 386 72 L418 78 C426 78 432 78 433.8 77.5 L436 66 L441.4 56 L436 50 L430.5 28.6 C424 16 416 11 407 11 Z"/>
  </g>
  <!-- hair -->
  <g fill="#bc9b66" filter="url(#txH)">
    <path d="M49 8 C68 8 79 22 78 40 C77 56 72 66 68 70 C64 60 58 50 54 40 C46 36 34 34 22 32 C26 16 36 8 49 8 Z"/>
    <path d="M136 6 C156 6 168 22 167 46 C166 58 160 68 156 72 C154 56 150 40 144 30 C136 24 124 22 114 28 C118 14 126 6 136 6 Z"/>
    <path d="M227 6 C243 6 253 18 252 38 L249 34 C244 24 236 21 227 21 C218 21 208 24 204 36 L201.4 38 C201 18 212 6 227 6 Z"/>
    <path d="M312.6 8 C298 8 286 20 286.5 40 C287 52 292 62 298 70 C300 54 304 42 308 34 C318 26 330 26 338 30 C334 16 324 8 312.6 8 Z"/>
    <path d="M407 10 C388 10 372 24 372.4 44 C373 56 378 66 386 72 C392 62 398 54 404 44 C412 38 420 36 430 30 C426 18 418 10 407 10 Z"/>
  </g>
  <g fill="#a88a60" opacity="0.8">
    <ellipse cx="52.3" cy="49" rx="4.5" ry="7"/><ellipse cx="162" cy="52" rx="3" ry="6"/><ellipse cx="291" cy="50" rx="3" ry="6"/><ellipse cx="400" cy="52" rx="4.5" ry="7"/>
  </g>
  <g fill="#6a5438">
    <ellipse cx="118" cy="47.5" rx="2.2" ry="1.2"/><ellipse cx="133" cy="47.5" rx="2.2" ry="1.2"/>
    <ellipse cx="217" cy="47" rx="2.5" ry="1.3"/><ellipse cx="237" cy="47" rx="2.5" ry="1.3"/>
    <ellipse cx="322" cy="47.5" rx="2.2" ry="1.2"/><ellipse cx="336" cy="47.5" rx="2.2" ry="1.2"/>
  </g>
  <g stroke="#8e7654" stroke-width="1.2" fill="none">
    <path d="M114 72 Q120 70 126 72"/><path d="M220 71 Q227 69 234 71"/><path d="M326 72 Q332 70 338 72"/>
  </g>
  <g fill="#2a2622"><ellipse cx="49" cy="105" rx="10" ry="2.6"/><ellipse cx="151" cy="104" rx="8" ry="3"/><ellipse cx="304" cy="104" rx="8" ry="3"/><ellipse cx="408" cy="105" rx="9" ry="2.6"/></g>
</svg>
</div>
<div class="t" style="left:2px;width:526px;text-align:center;top:672px;font-size:6.3px;line-height:7px;color:#222">Facial Reconstruction completed by Forensic Artist Samantha Molnar</div>
<!-- ================= PANEL 2 ================= -->
<div class="a" style="left:534px;top:2px;width:525px;height:37px;background:#0b64b6"></div>
<div class="hd" style="left:690px;top:10px;font-size:22px;line-height:22px;letter-spacing:0.12px;-webkit-text-stroke:0.5px #fff">Decedent’s Clothing</div>
<div class="t b" style="left:551.4px;top:49.8px;font-size:9px;line-height:9px;color:#111">Several articles of clothing that were found in association with the remains at the scene include <i>(Top Image):</i></div>
<div id="list2" style="position:absolute;left:0;top:0;font-size:9.3px;color:#1a1a1a">
  <div class="dot" style="left:551.5px;top:77px"></div><div class="li" style="left:567px;top:73.1px"><i>Croft and Barrow</i> brand coat, size XXL, made in Sri Lanka <b>(A)</b></div>
  <div class="dot" style="left:551.5px;top:101.6px"></div><div class="li" style="left:567px;top:97.7px"><i>Territory</i> brand coat, size XXL, made in Syria <b>(B)</b></div>
  <div class="dot" style="left:551.5px;top:125.6px"></div><div class="li" style="left:567px;top:121.7px">3 layers of pants:</div>
  <div class="dia" style="left:582px;top:147.5px">◊</div><div class="li" style="left:597.5px;top:146.6px;font-size:9.45px">Outer layer—Wrangler Jeans Co., straight</div>
  <div class="li" style="left:597.5px;top:165.1px;font-size:9.45px">leg jeans with red stitching in waistband <b>(C)</b></div>
  <div class="dia" style="left:582px;top:189.7px">◊</div><div class="li" style="left:597.5px;top:188.8px;font-size:9.45px">Middle layer—Unknown brand, cotton-</div>
  <div class="li" style="left:597.5px;top:207.1px;font-size:9.45px">polyester pants produced in Vietnam <b>(D)</b></div>
  <div class="dia" style="left:582px;top:231.8px">◊</div><div class="li" style="left:597.5px;top:230.9px;font-size:9.45px">Innermost layer—Unknown brand, has a</div>
  <div class="li" style="left:597.5px;top:250.7px;font-size:9.45px">white stripe down the pant leg</div>
  <div class="dot" style="left:551.5px;top:278px"></div><div class="li" style="left:567px;top:274.1px;font-size:9.6px">Black leather belt located in outermost pair of</div>
  <div class="li" style="left:567px;top:292.9px;font-size:9.6px">pants.</div>
  <div class="dot" style="left:551.5px;top:320.7px"></div><div class="li" style="left:567px;top:316.8px;font-size:9.55px">A pair of black shoes with no identifiable logo was</div>
  <div class="li" style="left:567px;top:335.4px;font-size:9.55px">found. No tag, brand, or size could be identified.</div>
  <div class="li" style="left:567px;top:354px;font-size:9.55px"><i>(Middle Image)</i></div>
  <div class="t b" style="left:551.4px;top:402.6px;font-size:9.05px;line-height:9px;color:#111">Additional items found with the body include</div>
  <div class="t b" style="left:551.4px;top:420.6px;font-size:9.05px;line-height:9px;color:#111"><i>(Bottom Image)</i>:</div>
  <div class="dot" style="left:551.5px;top:448px"></div><div class="li" style="left:566.5px;top:444.1px;font-size:9.5px">Zipper pulls <b>(A)</b></div>
  <div class="dot" style="left:551.5px;top:472.5px"></div><div class="li" style="left:566.5px;top:468.6px;font-size:9.5px">A grommet <b>(B)</b></div>
  <div class="dot" style="left:551.5px;top:496.6px"></div><div class="li" style="left:566.5px;top:492.7px;font-size:9.5px">Four coins <b>(C)</b></div>
  <div class="dot" style="left:551.5px;top:520.7px"></div><div class="li" style="left:566.5px;top:516.8px;font-size:9.5px">A buckle <b>(D)</b></div>
  <div class="dot" style="left:551.5px;top:544.9px"></div><div class="li" style="left:566.5px;top:541px;font-size:9.5px">Unidentifiable Metal Fragment <b>(E)</b></div>
  <div class="dot" style="left:551.5px;top:569px"></div><div class="li" style="left:566.5px;top:565.1px;font-size:9.5px">One partial key <b>(F)</b></div>
  <div class="dot" style="left:551.5px;top:593px"></div><div class="li" style="left:566.5px;top:589.1px;font-size:9.5px">One complete key (G)</div>
  <div class="dia" style="left:582.5px;top:612.6px">◊</div><div class="li" style="left:597.5px;top:611.7px;font-size:9.3px">Brand: A BUS</div>
  <div class="dia" style="left:582.5px;top:636.8px">◊</div><div class="li" style="left:597.5px;top:635.9px;font-size:9.3px">Serial Number: H 00471</div>
</div>
<!-- top image: labels -->
<svg style="left:783px;top:94px;filter:blur(0.35px)" width="264" height="146" viewBox="783 94 264 146">
  <defs>
    <filter id="blur1"><feGaussianBlur stdDeviation="0.6"/></filter>
    <linearGradient id="gC" x1="0" y1="0" x2="1" y2="0"><stop offset="0" stop-color="#909090"/><stop offset="0.3" stop-color="#b8b8b8"/><stop offset="0.6" stop-color="#a8a8a8"/><stop offset="1" stop-color="#bcbcbc"/></linearGradient>
  </defs>
  <rect x="783" y="94" width="264" height="146" fill="#151515"/>
  <g filter="url(#txS)">
  <rect x="788" y="123" width="131" height="26.5" fill="#404040"/>
  <rect x="789" y="124" width="129" height="3" fill="#444"/>
  <text x="820" y="140" font-family="Liberation Serif" font-style="italic" font-size="9" fill="#6a6a6a">raft&amp;Barrow</text>
  <rect x="836" y="149.5" width="31" height="24.5" fill="#333"/>
  <path d="M853 174 A5 5 0 0 1 863 174 Z" fill="#e8e8e8"/>
  <path d="M928 96 L1036 96 L1046 135 L1046 156 L928 156 Z" fill="#6e6e6e"/>
  <path d="M935 100 Q960 118 990 105 T1040 112" stroke="#888" stroke-width="3" fill="none" opacity="0.6"/>
  <rect x="953" y="137" width="93" height="19" fill="#8c8c8c"/>
  <text x="955" y="153" font-family="Liberation Serif" font-size="14" fill="#2a2a2a" letter-spacing="1.5">RITORY</text>
  <rect x="967" y="156" width="51" height="43" fill="#9a9a9a"/>
  <text x="980" y="165" font-family="Liberation Sans" font-weight="bold" font-size="9" fill="#333">2XL</text>
  <g stroke="#3e3e3e" stroke-width="1.5"><path d="M970 172 H1015 M970 178 H1014 M978 183 H1014 M970 189 H1005 M970 195 H1012"/></g>
  <path d="M794 198 L920 195 L950 198 L950 229.5 L920 230.5 L798 231 Z" fill="url(#gC)"/>
  <path d="M800 205 Q820 215 805 228 M900 196 Q915 210 935 228" stroke="#6a6a6a" stroke-width="2" fill="none"/>
  <text x="838" y="225" font-family="Liberation Sans" font-weight="bold" font-size="12" fill="#555">TRAIGHT</text>
  <path d="M968 210 Q980 204 995 208 Q1015 214 1019 228 L969 229 Z" fill="#5e5e5e"/>
  </g>
  <g font-family="Liberation Serif" font-weight="bold" font-size="8" fill="#f2f2f2">
    <text x="789" y="175">A</text><text x="930" y="175">B</text><text x="789" y="232">C</text><text x="958" y="232">D</text>
  </g>
  <text x="1008" y="238" font-family="Liberation Serif" font-size="4" fill="#ddd">1 cm</text>
  <path d="M1018 236.5 H1043 M1018 235 V238 M1043 235 V238" stroke="#ddd" stroke-width="0.8"/>
</svg>
<div class="t" style="left:994px;top:242.5px;font-size:7.65px;line-height:8px;color:#222">Actual images</div>
<!-- middle image: shoe -->
<div class="a" style="left:782px;top:275px;width:266px;height:149px;border:1px solid #8c8c8c;background:#fff"></div>
<svg style="left:782px;top:275px;filter:blur(0.3px)" width="266" height="149" viewBox="782 275 266 149">
  <defs>
    <radialGradient id="shoe" cx="0.55" cy="0.5" r="0.6"><stop offset="0" stop-color="#3a3a3a"/><stop offset="0.7" stop-color="#333"/><stop offset="1" stop-color="#262626"/></radialGradient>
    <filter id="blur2"><feGaussianBlur stdDeviation="0.8"/></filter>
  </defs>
  <g filter="url(#rough)"><path filter="url(#txS)" d="M790 352 C790.0 347.0 790.7 343.2 792.4 339.7 C794.1 336.2 796.3 333.3 800 331 C803.7 328.7 810.7 326.2 814.8 326 C818.9 325.8 821.5 328.7 824.8 329.7 C828.1 330.7 829.3 332.6 834.7 332.2 C840.1 331.8 851.2 328.7 857 327 C862.8 325.3 864.6 322.4 869.6 322 C874.6 321.6 881.2 326.4 887 324.8 C892.8 323.2 898.2 316.5 904.4 312.3 C910.6 308.1 916.8 303.6 924.3 299.9 C931.8 296.2 939.7 291.9 949.2 290 C958.8 288.1 975.4 289.8 981.6 288.7 C987.8 287.6 983.6 285.1 986.5 283.7 C989.4 282.2 995.1 279.4 999 280 C1002.9 280.6 1009.2 284.1 1010 287.4 C1010.8 290.7 1003.3 294.5 1004 299.9 C1004.7 305.3 1009.9 313.6 1014 319.8 C1018.1 326.0 1027.2 331.0 1028.9 337.2 C1030.6 343.4 1022.7 351.6 1023.9 357 C1025.1 362.4 1033.4 364.6 1036.3 369.6 C1039.2 374.6 1041.3 381.2 1041.3 387 C1041.3 392.8 1040.0 399.4 1036.3 404.4 C1032.6 409.4 1026.5 415.1 1019 416.8 C1011.5 418.5 1000.7 416.4 991.5 414.3 C982.3 412.2 971.1 406.9 964 404.4 C956.9 401.9 953.5 398.6 949 399.4 C944.5 400.2 942.6 406.5 936.8 409.4 C931.0 412.3 922.3 416.0 914.4 416.8 C906.5 417.6 897.8 416.0 889.5 414.3 C881.2 412.6 873.7 409.8 864.6 406.9 C855.5 404.0 842.6 399.5 834.7 397 C826.8 394.5 822.7 393.7 817.3 392 C811.9 390.3 806.5 390.7 802.4 387 C798.2 383.3 794.5 375.4 792.4 369.6 C790.3 363.8 790.0 357.0 790 352 Z" fill="#2c2c2c"/></g>
  <g stroke="#484848" stroke-width="1.1" fill="none" opacity="0.9">
    <path d="M905 330 Q940 310 975 318 Q1000 335 995 365"/><path d="M915 340 Q945 322 972 330"/><path d="M830 360 Q880 370 930 372 T1010 360"/><path d="M840 370 Q890 380 940 380"/><path d="M816 336 L830 350 L822 365"/><path d="M880 330 L890 345"/>
  </g>
  <g fill="#555" opacity="0.6"><circle cx="852" cy="352" r="1.5"/><circle cx="960" cy="393" r="1.2"/><circle cx="1000" cy="350" r="1.3"/><circle cx="925" cy="372" r="1"/></g>
  <path d="M783.5 419 H826 M783.5 416.5 V421.5 M826 416.5 V421.5" stroke="#111" stroke-width="1.1"/>
  <text x="827.5" y="421.2" font-family="Liberation Serif" font-weight="bold" font-size="5.5" fill="#111">5 cm</text>
</svg>
<div class="t" style="left:995.5px;top:429.2px;font-size:7.65px;line-height:8px;color:#222">Actual image</div>
<!-- bottom image: metal items -->
<svg style="left:780px;top:458px;filter:blur(0.35px)" width="264" height="187" viewBox="780 458 264 187">
  <defs>
    <radialGradient id="coin" cx="0.45" cy="0.45" r="0.6"><stop offset="0" stop-color="#5f5a4a"/><stop offset="1" stop-color="#3c3a32"/></radialGradient>
    <radialGradient id="rust" cx="0.5" cy="0.5" r="0.6"><stop offset="0" stop-color="#7a6a58"/><stop offset="1" stop-color="#5a4c40"/></radialGradient>
    <filter id="blur3"><feGaussianBlur stdDeviation="0.7"/></filter>
  </defs>
  <rect x="780" y="458" width="264" height="187" fill="#121212"/>
  <g filter="url(#txF)">
  <!-- A zipper pulls -->
  <path d="M806 474 Q812 468 817 474 L819 498 Q817 512 810 510 Q803 508 805 496 Z" fill="#9a9080"/>
  <ellipse cx="811" cy="502" rx="4" ry="3.5" fill="#151515"/>
  <path d="M826 472 Q838 466 851 472 L851 482 L845 486 L847 520 Q840 528 836 520 L835 486 L827 482 Z" fill="#8d8577"/>
  <!-- B grommet -->
  <ellipse cx="811" cy="529" rx="7" ry="5.5" fill="#2a2624"/>
  <!-- C coins -->
  <circle cx="809" cy="567.5" r="19" fill="#5a5444"/><circle cx="809" cy="567.5" r="16" fill="url(#coin)"/>
  <circle cx="854" cy="567" r="18.5" fill="#5c5a44"/><circle cx="854" cy="567" r="15.5" fill="#4a4a38"/>
  <circle cx="808" cy="609.5" r="15" fill="#566048"/><circle cx="808" cy="609.5" r="12" fill="#48503e"/>
  <circle cx="854" cy="611" r="18.5" fill="#5a4c3a"/><circle cx="854" cy="611" r="15.5" fill="#4a4034"/>
  <!-- D buckle -->
  <path d="M872 474 Q874 465 886 466 L928 466 Q942 466 943 478 L944 520 Q943 535 930 536 L888 537 Q874 536 873 524 Z M881 480 L881 522 Q882 528 890 528 L927 528 Q935 527 935 520 L935 482 Q934 474 926 474 L889 474 Q881 474 881 480 Z" fill="#6e5846" fill-rule="evenodd"/>
  <path d="M896 522 L904 522 L906 545 L913 566 L905 582 L897 582 L900 565 L895 545 Z" fill="#6a5a4c"/>
  <!-- E fragment -->
  <path d="M893 604 L900 596 L908 598 L914 591 L922 597 L931 600 L934 610 L930 618 L934 626 L924 632 L914 636 L904 630 L896 628 L892 618 Z" fill="url(#rust)"/>
  <path d="M938 600 L944 602 L946 610 L940 612 L936 606 Z" fill="#6a5c4c"/><path d="M937 620 L945 618 L947 628 L941 632 L936 628 Z" fill="#6a5c4c"/>
  <!-- F partial key -->
  <path d="M955 560 Q965 553 978 558 Q988 568 985 585 Q980 598 970 600 Q958 596 954 585 Q950 570 955 560 Z" fill="#8a7260"/>
  <path d="M962 605 Q970 600 978 606 L976 630 Q970 638 963 630 Z" fill="#6e5c4c"/>
  <!-- G complete key -->
  <path d="M996 560 Q1012 555 1027 560 L1027 586 L1015 590 L1015 632 Q1010 638 1006 632 L1005 590 L996 586 Z" fill="#a48e6a"/>
  <!-- zoomed key -->
  <path d="M956 478 Q960 467 990 466 Q1030 466 1036 476 L1040 500 Q1036 522 1026 534 L1024 545 L975 545 L970 534 Q958 520 956 500 Z" fill="#62594c"/>
  <path d="M1000 545 L1002 536 L1018 536 L1018 545 Z" fill="#4a443a"/>
  <ellipse cx="997" cy="490" rx="25" ry="9" fill="#141414"/>
  </g>
  <rect x="990" y="553" width="42" height="37" fill="none" stroke="#2a40a0" stroke-width="1.2"/>
  <rect x="952" y="463" width="88" height="82" fill="none" stroke="#2a40a0" stroke-width="1.2"/>
  <path d="M952 545 L990 553 M1040 545 L1032 553" stroke="#2a40a0" stroke-width="1"/>
  <text x="975" y="515" font-family="Liberation Sans" font-weight="bold" font-size="7" fill="#4a4236">BOSTON</text>
  <g font-family="Liberation Serif" font-weight="bold" font-size="8" fill="#f4f4f4">
    <text x="789" y="477">A</text><text x="866" y="477">D</text><text x="789" y="527">B</text><text x="789" y="551">C</text><text x="880" y="597">E</text><text x="946" y="563">F</text><text x="983" y="563">G</text>
  </g>
  <text x="990" y="641" font-family="Liberation Serif" font-weight="bold" font-size="6" fill="#eee">2 cm</text>
  <path d="M1006 639 H1040 M1006 637 V641 M1040 637 V641" stroke="#eee" stroke-width="1"/>
</svg>
<div class="t" style="left:989px;top:651.3px;font-size:7.65px;line-height:8px;color:#222">Actual images</div>
<!-- ================= PANEL 3 ================= -->
<div class="a" style="left:1065px;top:2px;width:525px;height:37px;background:#0b64b6"></div>
<div class="hd" style="left:1218px;top:10.6px;font-size:22px;line-height:22px;letter-spacing:0.15px;-webkit-text-stroke:0.5px #fff">Location of Remains</div>
<div class="t" style="left:1098.5px;top:57.6px;font-size:9.35px;line-height:9.35px;color:#111">The remains were located on January 8, 2016 at 1345 Marcy Street, Akron, Ohio.</div>
<svg style="left:1063px;top:0" width="529" height="683" viewBox="1063 0 529 683">
  <defs>
    <clipPath id="ohio3"><path d="M1164.9 113 L1215.8 113 L1234.5 119.6 L1242.2 122.9 L1253.2 121.8 L1270.7 118.5 L1286 112 L1297 107.6 L1312.4 104.3 L1312.4 151.5 L1308 155.8 L1301.4 177.8 L1290.5 191 L1273 199.7 L1264 210.7 L1253 219.5 L1242 225 L1231 221.7 L1215.8 217.3 L1194 213 L1183 208.5 L1176.3 202 L1164.3 200.8 Z"/></clipPath>
  </defs>
  <text x="1157" y="110.8" font-family="Liberation Serif" font-weight="bold" font-size="17" fill="#111">A</text>
  <text x="1466" y="116" font-family="Liberation Serif" font-weight="bold" font-size="17" fill="#111">B</text>
  <path d="M1164.9 113 L1215.8 113 L1234.5 119.6 L1242.2 122.9 L1253.2 121.8 L1270.7 118.5 L1286 112 L1297 107.6 L1312.4 104.3 L1312.4 151.5 L1308 155.8 L1301.4 177.8 L1290.5 191 L1273 199.7 L1264 210.7 L1253 219.5 L1242 225 L1231 221.7 L1215.8 217.3 L1194 213 L1183 208.5 L1176.3 202 L1164.3 200.8 Z" fill="#cfe5c8" stroke="#6d7d6d" stroke-width="1"/>
  <g clip-path="url(#ohio3)" fill="none" stroke="#6f806f" stroke-width="0.75">
<polyline points="1160.0,113.2 1170.1,114.3 1179.0,113.3 1189.8,114.7 1198.8,114.0 1206.3,112.8 1214.5,114.2 1220.9,114.7 1228.3,113.4 1234.5,115.2 1245.0,114.9 1254.7,112.9 1262.7,114.0 1269.3,115.1 1277.6,113.2 1288.5,113.1 1300.0,113.9 1309.3,113.6"/>
<polyline points="1160.0,123.2 1166.2,124.9 1173.6,124.7 1180.9,125.1 1192.2,124.6 1202.8,124.2 1213.2,123.1 1222.1,124.8 1229.3,125.0 1240.6,123.8 1248.8,123.9 1257.1,125.2 1265.4,122.9 1272.0,124.5 1283.9,124.0 1292.9,124.1 1303.4,123.3 1313.0,124.1"/>
<polyline points="1160.0,134.2 1167.0,134.6 1178.6,134.6 1188.2,134.5 1194.8,134.0 1205.7,135.7 1213.9,135.4 1224.0,136.0 1235.7,134.8 1247.7,136.1 1257.2,135.9 1266.1,134.7 1273.6,135.9 1280.6,134.0 1291.4,135.7 1300.3,135.8 1306.6,134.4 1314.4,134.8"/>
<polyline points="1160.0,145.0 1168.0,147.0 1179.9,146.6 1188.8,145.4 1200.6,146.1 1210.9,144.9 1218.2,146.8 1229.0,146.9 1238.6,145.8 1248.1,146.8 1255.9,146.1 1263.6,146.6 1269.6,146.4 1281.4,144.9 1290.9,146.3 1302.0,146.2 1309.6,145.8"/>
<polyline points="1160.0,158.0 1166.8,156.0 1173.4,155.9 1182.0,156.1 1193.3,157.4 1200.0,157.1 1208.0,157.0 1215.3,156.2 1222.4,156.7 1232.6,157.1 1238.9,157.5 1250.2,157.7 1260.9,155.8 1269.7,156.0 1280.3,156.2 1290.5,156.4 1300.7,156.6 1307.0,156.7 1314.8,158.0"/>
<polyline points="1160.0,168.0 1169.3,169.1 1175.9,168.2 1184.9,168.6 1196.7,167.5 1206.9,168.1 1216.3,167.0 1227.2,169.1 1235.3,167.6 1247.3,167.1 1253.7,167.0 1264.6,168.6 1273.3,168.3 1279.4,168.3 1288.1,168.0 1296.4,167.8 1303.8,166.9 1312.4,167.4"/>
<polyline points="1160.0,179.8 1170.3,178.9 1177.8,178.7 1186.7,179.3 1198.5,178.0 1207.3,179.0 1217.6,179.9 1228.3,179.3 1238.9,179.4 1250.0,179.5 1260.1,178.4 1271.6,178.7 1281.3,179.8 1293.1,180.2 1299.1,178.6 1307.0,178.7 1313.9,179.1"/>
<polyline points="1160.0,189.5 1171.7,190.6 1180.4,189.1 1192.2,190.5 1199.4,189.6 1209.3,190.4 1216.8,191.1 1224.8,189.4 1235.8,189.2 1245.9,189.3 1255.5,189.5 1263.8,191.1 1272.6,189.8 1282.3,189.5 1289.3,189.7 1297.0,189.3 1308.7,188.9"/>
<polyline points="1160.0,202.0 1170.2,199.8 1179.2,199.9 1188.9,201.5 1196.3,199.8 1205.6,200.0 1213.4,200.9 1224.8,200.7 1231.6,201.7 1242.6,201.1 1248.8,200.3 1257.3,201.1 1264.6,201.7 1275.7,202.0 1287.0,199.8 1296.5,200.0 1307.9,201.6"/>
<polyline points="1160.0,211.3 1166.4,212.8 1176.0,212.3 1184.8,212.7 1192.9,211.4 1201.0,211.5 1210.7,212.9 1217.2,211.0 1226.2,212.4 1233.4,211.4 1239.7,210.9 1248.7,212.4 1258.6,211.2 1265.2,213.0 1274.5,211.8 1284.6,212.5 1293.8,211.0 1304.7,211.3 1311.0,211.6"/>
<polyline points="1160.0,222.3 1167.0,222.5 1176.0,221.2 1187.1,222.7 1198.6,222.4 1205.9,222.7 1217.3,222.1 1228.7,223.1 1237.1,223.1 1248.7,222.7 1254.8,221.6 1264.4,222.3 1275.0,222.4 1281.9,223.0 1291.2,222.9 1298.4,223.2 1307.7,222.7"/>
<path d="M1180.4 103.0 L1179.2 114.0"/>
<path d="M1195.9 103.0 L1196.0 114.0"/>
<path d="M1216.6 103.0 L1215.5 114.0"/>
<path d="M1229.1 103.0 L1229.3 114.0"/>
<path d="M1242.1 103.0 L1241.2 114.0"/>
<path d="M1255.9 103.0 L1256.0 114.0"/>
<path d="M1275.6 103.0 L1274.5 114.0"/>
<path d="M1289.8 103.0 L1290.2 114.0"/>
<path d="M1310.5 103.0 L1310.9 114.0"/>
<path d="M1175.9 114.0 L1175.9 124.0"/>
<path d="M1191.1 114.0 L1190.9 124.0"/>
<path d="M1204.3 114.0 L1204.5 124.0"/>
<path d="M1224.0 114.0 L1224.7 124.0"/>
<path d="M1244.9 114.0 L1244.6 124.0"/>
<path d="M1257.8 114.0 L1258.0 124.0"/>
<path d="M1276.6 114.0 L1275.7 124.0"/>
<path d="M1290.1 114.0 L1291.0 124.0"/>
<path d="M1304.8 114.0 L1304.5 124.0"/>
<path d="M1176.9 124.0 L1176.6 135.0"/>
<path d="M1195.6 124.0 L1196.2 135.0"/>
<path d="M1216.7 124.0 L1216.3 135.0"/>
<path d="M1231.3 124.0 L1232.2 135.0"/>
<path d="M1250.8 124.0 L1251.9 135.0"/>
<path d="M1271.4 124.0 L1270.8 135.0"/>
<path d="M1289.9 124.0 L1290.9 135.0"/>
<path d="M1306.2 124.0 L1305.5 135.0"/>
<path d="M1174.1 135.0 L1174.7 146.0"/>
<path d="M1188.8 135.0 L1188.3 146.0"/>
<path d="M1206.3 135.0 L1205.4 146.0"/>
<path d="M1218.8 135.0 L1219.4 146.0"/>
<path d="M1235.2 135.0 L1236.3 146.0"/>
<path d="M1253.4 135.0 L1254.1 146.0"/>
<path d="M1272.6 135.0 L1272.6 146.0"/>
<path d="M1294.0 135.0 L1294.4 146.0"/>
<path d="M1175.2 146.0 L1176.0 157.0"/>
<path d="M1193.9 146.0 L1193.9 157.0"/>
<path d="M1209.1 146.0 L1207.7 157.0"/>
<path d="M1226.5 146.0 L1225.7 157.0"/>
<path d="M1244.8 146.0 L1243.6 157.0"/>
<path d="M1260.4 146.0 L1261.3 157.0"/>
<path d="M1276.2 146.0 L1275.4 157.0"/>
<path d="M1288.3 146.0 L1287.2 157.0"/>
<path d="M1308.5 146.0 L1307.6 157.0"/>
<path d="M1176.2 157.0 L1175.9 168.0"/>
<path d="M1196.1 157.0 L1196.7 168.0"/>
<path d="M1213.1 157.0 L1212.3 168.0"/>
<path d="M1231.1 157.0 L1230.2 168.0"/>
<path d="M1251.1 157.0 L1251.1 168.0"/>
<path d="M1267.3 157.0 L1266.7 168.0"/>
<path d="M1285.2 157.0 L1284.7 168.0"/>
<path d="M1302.4 157.0 L1302.4 168.0"/>
<path d="M1180.0 168.0 L1179.0 179.0"/>
<path d="M1199.7 168.0 L1201.1 179.0"/>
<path d="M1221.4 168.0 L1221.5 179.0"/>
<path d="M1233.9 168.0 L1234.4 179.0"/>
<path d="M1252.6 168.0 L1253.5 179.0"/>
<path d="M1264.8 168.0 L1263.6 179.0"/>
<path d="M1281.6 168.0 L1282.4 179.0"/>
<path d="M1293.6 168.0 L1292.5 179.0"/>
<path d="M1175.6 179.0 L1175.2 190.0"/>
<path d="M1196.9 179.0 L1197.4 190.0"/>
<path d="M1215.3 179.0 L1215.4 190.0"/>
<path d="M1230.1 179.0 L1230.1 190.0"/>
<path d="M1245.5 179.0 L1244.6 190.0"/>
<path d="M1266.9 179.0 L1266.0 190.0"/>
<path d="M1278.6 179.0 L1279.7 190.0"/>
<path d="M1295.4 179.0 L1294.6 190.0"/>
<path d="M1177.2 190.0 L1177.3 201.0"/>
<path d="M1191.6 190.0 L1191.9 201.0"/>
<path d="M1213.1 190.0 L1213.1 201.0"/>
<path d="M1229.0 190.0 L1230.1 201.0"/>
<path d="M1241.9 190.0 L1242.7 201.0"/>
<path d="M1261.5 190.0 L1262.6 201.0"/>
<path d="M1276.0 190.0 L1275.5 201.0"/>
<path d="M1291.8 190.0 L1290.8 201.0"/>
<path d="M1306.7 190.0 L1306.0 201.0"/>
<path d="M1180.3 201.0 L1181.0 212.0"/>
<path d="M1201.0 201.0 L1202.1 212.0"/>
<path d="M1221.5 201.0 L1221.5 212.0"/>
<path d="M1239.1 201.0 L1240.5 212.0"/>
<path d="M1257.4 201.0 L1257.9 212.0"/>
<path d="M1271.5 201.0 L1271.1 212.0"/>
<path d="M1284.5 201.0 L1283.2 212.0"/>
<path d="M1303.3 201.0 L1301.9 212.0"/>
<path d="M1173.1 212.0 L1172.5 222.0"/>
<path d="M1190.2 212.0 L1189.9 222.0"/>
<path d="M1206.2 212.0 L1205.0 222.0"/>
<path d="M1221.6 212.0 L1222.6 222.0"/>
<path d="M1242.0 212.0 L1242.4 222.0"/>
<path d="M1258.5 212.0 L1259.5 222.0"/>
<path d="M1270.8 212.0 L1272.1 222.0"/>
<path d="M1287.2 212.0 L1288.1 222.0"/>
<path d="M1302.4 212.0 L1300.9 222.0"/>
<path d="M1173.2 222.0 L1172.3 228.0"/>
<path d="M1186.8 222.0 L1185.9 228.0"/>
<path d="M1203.8 222.0 L1204.9 228.0"/>
<path d="M1224.5 222.0 L1223.5 228.0"/>
<path d="M1242.5 222.0 L1243.8 228.0"/>
<path d="M1258.1 222.0 L1257.2 228.0"/>
<path d="M1275.7 222.0 L1276.7 228.0"/>
<path d="M1294.9 222.0 L1294.2 228.0"/>
<path d="M1308.9 222.0 L1308.7 228.0"/>
  </g>
  <rect x="1272" y="125" width="11" height="15.5" fill="#9ccbe8" stroke="#5a7a9a" stroke-width="0.6"/>
  <circle cx="1277" cy="134" r="2.5" fill="#111"/>
  <!-- connector lines -->
  <g stroke="#555" stroke-width="0.9" fill="none">
    <path d="M1277 134 L1382 117.5"/><path d="M1277 135 L1350 245"/>
  </g>
  <!-- Summit county map B -->
  <g stroke="#7d8a90" stroke-width="0.5">
    <rect x="1383.5" y="117" width="19" height="26.5" fill="#8fb98a"/>
    <rect x="1402.5" y="117" width="25" height="26.5" fill="#a9a6d6"/>
    <rect x="1427.5" y="117" width="26" height="26.5" fill="#cad9ee"/>
    <rect x="1350" y="143.5" width="33.5" height="26.5" fill="#a9b1da"/>
    <rect x="1383.5" y="143.5" width="35.5" height="26.5" fill="#c6e1e6"/>
    <rect x="1419" y="143.5" width="34.5" height="26.5" fill="#a3b7e0"/>
    <rect x="1350" y="170" width="33.5" height="23.6" fill="#7b9db2"/>
    <rect x="1383.5" y="170" width="70" height="23.6" fill="#93c4a0"/>
    <rect x="1350" y="193.6" width="33.5" height="26.4" fill="#b3d9b2"/>
    <rect x="1350" y="220" width="33.5" height="23.7" fill="#a9d2b2"/>
    <rect x="1383.5" y="193.6" width="70" height="50" fill="#8ab8aa"/>
    <rect x="1390" y="230" width="63.5" height="13.7" fill="#b4d3ea"/>
    <rect x="1363" y="243.7" width="40" height="29" fill="#a9c29a"/>
    <rect x="1403" y="243.7" width="42" height="29" fill="#93aa92"/>
  </g>
  <path d="M1384 195 C1392 188 1400 192 1410 190 C1420 195 1425 200 1432 205 L1440 218 L1438 232 L1410 234 L1392 236 L1386 230 L1384 210 Z" fill="#ede6b2"/>
  <rect x="1368" y="228" width="22" height="15" fill="#a2a88e"/>
  <circle cx="1408" cy="223" r="4" fill="#f4f4f4" stroke="#111" stroke-width="1"/>
  <path d="M1408 219 A4 4 0 0 1 1412 223 L1408 223 Z M1408 227 A4 4 0 0 1 1404 223 L1408 223 Z" fill="#111"/>
  <g font-family="Liberation Sans" font-weight="bold" font-size="4.1" fill="#1a1a1a">
    <text x="1394" y="121">Northfield</text><text x="1361" y="128">Sagamore Hills</text><text x="1407" y="131">Macedonia</text><text x="1432" y="124">Reminderville</text>
    <text x="1384" y="140">Northfield Center</text><text x="1433" y="139">Twinsburg</text>
    <text x="1392" y="151">Boston Heights</text><text x="1356" y="158">Richfield</text><text x="1385" y="158">Boston</text><text x="1426" y="158">Hudson</text>
    <text x="1360" y="182">Bath</text><text x="1383" y="178">Cuyahoga Falls</text><text x="1435" y="180">Stow</text><text x="1415" y="188">Silver Lake</text><text x="1420" y="196">Munroe Falls</text>
    <text x="1356" y="199">Fairlawn</text><text x="1430" y="206">Tallmadge</text><text x="1355" y="212">Copley</text><text x="1398" y="213">Akron</text><text x="1431" y="223">Mogadore</text>
    <text x="1352" y="228">Norton</text><text x="1427" y="233">Lakemore</text><text x="1361" y="238">Barberton</text><text x="1395" y="241">Coventry</text><text x="1425" y="242">Springfield</text>
    <text x="1372" y="256">New Franklin</text><text x="1416" y="258">Green</text><text x="1364" y="267">Clinton</text>
  </g>
  <g stroke="#444" stroke-width="0.9" fill="none">
    <path d="M1408 223 L1155 288"/><path d="M1408 224 L1320 288"/>
  </g>
  <!-- Map C -->
  <rect x="1154.5" y="287.5" width="165" height="190.5" fill="#f5e9b2" stroke="#8c8a7a" stroke-width="1"/>
  <g fill="#fcf8e6">
    <rect x="1173" y="288" width="2" height="190"/><rect x="1194" y="288" width="2" height="150"/><rect x="1212" y="288" width="2" height="190"/>
    <rect x="1230" y="288" width="2" height="190"/><rect x="1249.5" y="288" width="2" height="170"/><rect x="1269" y="300" width="2" height="178"/>
    <rect x="1287" y="368" width="2" height="100"/><rect x="1306.5" y="323" width="2" height="140"/>
    <rect x="1155" y="313.5" width="164" height="2"/><rect x="1270" y="322.5" width="49" height="2"/><rect x="1270" y="351" width="49" height="2"/>
    <rect x="1155" y="412.5" width="164" height="2"/><rect x="1155" y="432" width="112" height="2"/><rect x="1155" y="447" width="100" height="2"/>
    <rect x="1250" y="453" width="69" height="2"/><rect x="1155" y="464" width="95" height="2"/>
  </g>
  <rect x="1155" y="367.5" width="164" height="2" fill="#e6dba4"/>
  <g font-family="Liberation Sans" font-size="3.5" fill="#555">
    <text x="1290" y="324.5">Eastview</text><text x="1272" y="354">Upland Ave</text><text x="1187" y="418">Laura St</text><text x="1177" y="437">E Emeling Ave</text><text x="1290" y="417">Sabena Ave</text><text x="1293" y="456">Gilbert St</text><text x="1157" y="450">Willow St</text>
  </g>
  <g font-family="Liberation Sans" font-size="3.6" fill="#555">
    <text transform="translate(1178 305) rotate(-90)">Curtis St</text>
    <text transform="translate(1197 345) rotate(-90)">Moore St</text>
    <text transform="translate(1215 420) rotate(-90)">Andrus St</text>
    <text transform="translate(1254 305) rotate(-90)">Bellows St</text>
    <text transform="translate(1254 425) rotate(-90)">Bellows St</text>
    <text transform="translate(1274 340) rotate(-90)">Grant St</text>
    <text transform="translate(1291 440) rotate(-90)">Grand St</text>
    <text transform="translate(1310 450) rotate(-90)">Sherman St</text>
    <text transform="translate(1178 420) rotate(-90)">Curtis St</text>
    <text transform="translate(1303 345) rotate(-90)">Annadale Ave</text>
  </g>
  <g font-family="Liberation Sans" font-size="3.8" font-weight="bold" fill="#222">
    <text transform="translate(1234 405) rotate(-90)">Marcy St</text>
    <text transform="translate(1196 475) rotate(-90)">Marcy St</text>
  </g>
  <rect x="1156" y="290.5" width="15.5" height="25" fill="#fff" stroke="#777" stroke-width="0.5"/>
  <path d="M1163.8 296 L1158.5 313 L1163.8 309 L1169 313 Z" fill="#111"/>
  <text x="1161.5" y="295" font-family="Liberation Serif" font-size="4" fill="#111">N</text>
  <text x="1302" y="307" font-family="Liberation Serif" font-weight="bold" font-size="19" fill="#111">C</text>
  <circle cx="1236" cy="380.5" r="3.6" fill="#f4f4f4" stroke="#111" stroke-width="0.9"/>
  <path d="M1236 376.9 A3.6 3.6 0 0 1 1239.6 380.5 L1236 380.5 Z M1236 384.1 A3.6 3.6 0 0 1 1232.4 380.5 L1236 380.5 Z" fill="#111"/>
  <rect x="1243" y="460" width="75" height="16.5" fill="#fff" stroke="#555" stroke-width="0.6"/>
  <text x="1245" y="467" font-family="Liberation Sans" font-size="4.5" fill="#222">0   0.05  0.1        0.2 Miles</text>
  <path d="M1245 472 H1300 M1245 470 V473 M1255 470 V473 M1265 470 V473 M1275 470 V473 M1285 470 V473" stroke="#333" stroke-width="0.6"/>
  <!-- Map D aerial -->
  <rect x="1322" y="331.3" width="171" height="201" fill="#3e403a" stroke="#777" stroke-width="1"/>
  <g filter="url(#txS)">
    <rect x="1323" y="332" width="169" height="200" fill="#3f423c"/>
    <rect x="1323" y="332" width="169" height="15" fill="#4a4c44"/>
    <rect x="1350" y="334" width="14" height="10" fill="#c8ccd0"/><rect x="1384" y="334" width="10" height="12" fill="#5a5c58"/><rect x="1430" y="334" width="30" height="12" fill="#5e5a48"/>
    <rect x="1323" y="346" width="169" height="2.5" fill="#a8a290"/>
    <rect x="1323" y="348.5" width="169" height="12" fill="#6a6c66"/>
    <rect x="1343" y="332" width="8" height="200" fill="#64665f"/>
    <rect x="1343" y="360" width="1.5" height="172" fill="#a8a694"/><rect x="1349.5" y="360" width="1.5" height="172" fill="#a8a694"/>
    <rect x="1358" y="410" width="3" height="122" fill="#8a8a80"/>
    <rect x="1463.5" y="332" width="9" height="200" fill="#777873"/>
    <rect x="1455" y="360" width="2" height="172" fill="#a09e8e"/>
    <!-- brick building -->
    <rect x="1354.6" y="365.4" width="37.7" height="11" fill="#262626"/>
    <rect x="1357" y="376" width="16" height="24" fill="#7a5444"/><rect x="1375" y="376" width="17" height="24" fill="#7c5646"/>
    <!-- light building -->
    <rect x="1392" y="377.7" width="36" height="6" fill="#1e1e1e"/>
    <rect x="1392" y="383.7" width="36" height="27.8" fill="#b4bcc0"/>
    <rect x="1392" y="368.5" width="36" height="9" fill="#8e9088"/>
    <!-- lot -->
    <rect x="1428" y="367" width="28" height="28" fill="#a6a28c"/>
    <rect x="1428" y="395" width="28" height="20" fill="#55574c"/>
    <!-- left column houses -->
    <rect x="1326" y="362" width="14" height="23" fill="#25282c"/><rect x="1332" y="366" width="7" height="16" fill="#8a949a"/>
    <rect x="1325" y="395" width="15" height="14" fill="#8c9296"/>
    <rect x="1324" y="443" width="13" height="12" fill="#6e5244"/><rect x="1323" y="459" width="15" height="11" fill="#7e868c"/>
    <rect x="1324" y="475" width="13" height="10" fill="#4e5256"/><rect x="1324" y="500" width="13" height="15" fill="#7a5c4c"/><rect x="1323" y="520" width="15" height="10" fill="#8a8c86"/>
    <!-- center column houses -->
    <rect x="1365" y="444" width="24" height="11" fill="#a6aeb6"/><rect x="1366" y="461" width="22" height="11" fill="#b2b6ba"/>
    <rect x="1365" y="475" width="24" height="13" fill="#8c7258"/><rect x="1366" y="492" width="22" height="13" fill="#4a5058"/>
    <rect x="1366" y="513" width="20" height="12" fill="#6a4c40"/>
    <path d="M1390 445 Q1415 438 1430 455 Q1436 485 1425 515 L1400 530 L1390 525 Z" fill="#36332c"/>
    <!-- right column houses -->
    <rect x="1428" y="441" width="20" height="14" fill="#8a7a60"/><rect x="1428" y="456" width="24" height="14" fill="#aebcc4"/>
    <rect x="1425" y="474" width="23" height="14" fill="#6e7886"/><rect x="1428" y="490" width="22" height="15" fill="#2e3034"/>
    <!-- far right houses -->
    <rect x="1474" y="360" width="18" height="35" fill="#222428"/><rect x="1478" y="400" width="14" height="10" fill="#c4c8cc"/>
    <rect x="1475" y="420" width="17" height="20" fill="#4a4c50"/><rect x="1476" y="450" width="16" height="14" fill="#6a6e70"/><rect x="1475" y="475" width="17" height="12" fill="#585c60"/><rect x="1477" y="495" width="15" height="12" fill="#7a7e80"/>
    <rect x="1405" y="426" width="8" height="10" fill="#9aa2a8"/>
    <rect x="1360" y="405" width="50" height="10" fill="#3e4838"/>
  </g>
  <rect x="1356" y="418" width="56.5" height="23.4" fill="none" stroke="#e0282a" stroke-width="1.4"/>
  <path d="M1372 432 L1378 426 L1382 430 L1376 436 Z" fill="#e0282a"/>
  <rect x="1326" y="334" width="13" height="25" fill="#fff"/>
  <path d="M1332.5 340 L1328 356 L1332.5 352.5 L1337 356 Z" fill="#111"/>
  <text x="1477" y="351" font-family="Liberation Serif" font-weight="bold" font-size="17" fill="#fafafa">D</text>
  <rect x="1406" y="517" width="85" height="12.5" fill="#fafafa"/>
  <text x="1412" y="523" font-family="Liberation Sans" font-size="4" fill="#333">0 0.00750.015          0.03 Miles</text>
  <path d="M1410 526.5 H1488" stroke="#444" stroke-width="0.6"/>
  <!-- About section left box -->
  <defs>
    <radialGradient id="abg" cx="0.35" cy="0.5" r="0.8"><stop offset="0" stop-color="#2c86d8"/><stop offset="0.6" stop-color="#1a6cc4"/><stop offset="1" stop-color="#1462b8"/></radialGradient>
    <linearGradient id="abg2" x1="0" y1="0" x2="1" y2="0"><stop offset="0" stop-color="#3992de"/><stop offset="0.5" stop-color="#1c6fc8"/><stop offset="1" stop-color="#1563bd"/></linearGradient>
  </defs>
  <rect x="1065" y="556" width="146" height="72.6" fill="url(#abg2)"/>
  <!-- ohio seal -->
  <circle cx="1104" cy="591.7" r="27.5" fill="#1e4f90" stroke="#caa850" stroke-width="0.8"/>
  <circle cx="1104" cy="591.7" r="20.5" fill="#f0dfae"/>
  <path d="M1083.5 591.7 A20.5 20.5 0 0 1 1124.5 591.7 Z" fill="#f6d88a"/>
  <g stroke="#f0b840" stroke-width="1.2"><path d="M1104 588 L1104 573 M1104 588 L1094 575 M1104 588 L1114 575 M1104 588 L1087 580 M1104 588 L1121 580"/></g>
  <path d="M1084 588 Q1094 582 1104 588 Q1114 582 1124 588 L1124 597 L1084 597 Z" fill="#3e9a46"/>
  <path d="M1097 600 L1101 610 L1095 610 Z M1111 600 L1115 610 L1109 610 Z" fill="#8a6a3a"/>
  <text font-family="Liberation Serif" font-size="4.2" fill="#e8eef8" font-weight="bold"><textPath href="#sealArc" startOffset="50%" text-anchor="middle">ATTORNEY GENERAL OF THE STATE OF OHIO</textPath></text>
  <path id="sealArc" d="M1080 595 A24 24 0 1 1 1128 595" fill="none"/>
  <!-- bci badge -->
  <circle cx="1170" cy="591.7" r="27" fill="#3a3020"/>
  <circle cx="1170" cy="591.7" r="26" fill="#f2b420"/>
  <circle cx="1170" cy="591.3" r="17" fill="#fdf6e0"/>
  <path d="M1170 574.5 L1174.2 585.5 L1186 585.5 L1176.5 592.7 L1180.3 604 L1170 597 L1159.7 604 L1163.5 592.7 L1154 585.5 L1165.8 585.5 Z" fill="#f2b420"/>
  <circle cx="1170" cy="591" r="6" fill="#3b7bc0"/><circle cx="1170" cy="591" r="4" fill="#6aa56a"/>
  <text x="1170" y="614" font-family="Liberation Sans" font-weight="bold" font-size="8" fill="#222" text-anchor="middle">BCI</text>
  <path id="arcB" d="M1149.8 599.05 A21.5 21.5 0 1 1 1190.2 599.05" fill="none"/>
  <text font-size="5.5" fill="#222" font-family="Liberation Sans" font-weight="bold"><textPath href="#arcB" startOffset="50%" text-anchor="middle">OHIO ATTORNEY GENERAL</textPath></text>
</svg>
<!-- About right navy -->
<div class="a" style="left:1214px;top:556px;width:369px;height:72.6px;background:#0d3a70"></div>
<div class="hd" style="left:1222.6px;top:561.6px;font-size:12px;line-height:12px;letter-spacing:0.9px;-webkit-text-stroke:0.7px #fff">About BCI CIU</div>
<div class="a" style="left:1222px;top:576.5px;width:360px;font-size:8px;line-height:9.25px;color:#f2f6fb;white-space:nowrap;-webkit-text-stroke:0.15px #f2f6fb">
The Criminal Intelligence Unit consists of Criminal Intelligence Analysts and a Criminal Intelligence<br>
Analyst Supervisor. Analysts are located in BCI London headquarters, as well as regional offices in<br>
Youngstown, Bowling Green and Richfield. The members receive and fulfill requests from BCI Agents,<br>
local, state, federal law enforcement agencies and task forces. Our mission is to predict and expose<br>
criminal activity in order to prevent, eliminate or neutralize the activity.
</div>
<div class="t" style="left:1078.7px;top:635.5px;font-family:'Liberation Serif',serif;font-size:12.9px;line-height:12.9px;color:#c59c30;-webkit-text-stroke:0.25px #c59c30">This publication may be disseminated to the general public.</div>
<div class="a" style="left:1065px;top:653px;width:525px;height:2.6px;background:#0c2f5c"></div>
<div class="a" style="left:1065px;top:655.6px;width:525px;height:25.4px;background:#d3dfec"></div>
<div class="t b" style="left:1065px;width:525px;text-align:center;top:658px;font-size:8.67px;line-height:9px;color:#1a55a0;padding-left:21px;-webkit-text-stroke:0.25px #1a55a0">Ohio BCI Criminal Intelligence Unit • 1560 S.R. 56 SW • London, OH 43140 • www.OhioAttorneyGeneral.gov</div>
<div class="t b" style="left:1065px;width:525px;text-align:center;top:667px;font-size:8.7px;line-height:9px;color:#1a55a0;padding-left:21px;-webkit-text-stroke:0.25px #1a55a0">To submit a tip please call: 740-845-2406 • For investigative assistance please call: 855-BCI-OHIO (855-224-6446)</div>

</body></html>
